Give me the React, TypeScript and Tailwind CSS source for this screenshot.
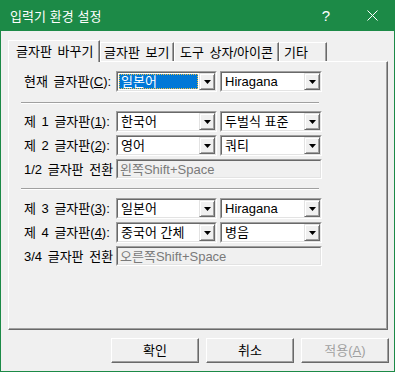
import React from "react";

const font = "font-['Liberation_Sans','Noto_Sans_CJK_KR',sans-serif]";

function DropButton() {
  return (
    <div className="flex h-full w-[16px] shrink-0 items-center justify-center border border-t-[#e3e3e3] border-l-[#e3e3e3] border-r-[#696969] border-b-[#696969] bg-[#f0f0f0] shadow-[inset_1px_1px_0_#ffffff,inset_-1px_-1px_0_#a0a0a0]">
      <svg width="7" height="4" viewBox="0 0 7 4">
        <path d="M0 0h7L3.5 4z" fill="#000" />
      </svg>
    </div>
  );
}

interface ComboProps {
  value: string;
  width: string;
  selected?: boolean;
}

function Combo({ value, width, selected }: ComboProps) {
  return (
    <div
      className={`h-[21px] ${width} border border-t-[#a0a0a0] border-l-[#a0a0a0] border-r-white border-b-white`}
    >
      <div className="flex h-full border border-t-[#696969] border-l-[#696969] border-r-[#e3e3e3] border-b-[#e3e3e3] bg-white">
        <div className="flex min-w-0 flex-1 p-[1px]">
          {selected ? (
            <div className="flex flex-1 items-center border border-dotted border-[#f0c040] bg-[#0078d7] pl-[1px] text-white">
              {value}
            </div>
          ) : (
            <div className="flex flex-1 items-center pl-[2px] text-black">
              {value}
            </div>
          )}
        </div>
        <DropButton />
      </div>
    </div>
  );
}

function DisabledInput({ value }: { value: string }) {
  return (
    <div className="h-[20px] w-[206px] border border-t-[#a0a0a0] border-l-[#a0a0a0] border-r-white border-b-white">
      <div className="flex h-full items-center border border-t-[#696969] border-l-[#696969] border-r-[#e3e3e3] border-b-[#e3e3e3] bg-[#f0f0f0] pl-[2px] text-[#7a7a7a]">
        {value}
      </div>
    </div>
  );
}

function Separator() {
  return (
    <div className="ml-[12px] w-[298px] border-t border-b border-t-[#a0a0a0] border-b-white" />
  );
}

function Row({
  label,
  children,
}: {
  label: React.ReactNode;
  children: React.ReactNode;
}) {
  return (
    <div className="flex items-center">
      <div className="w-[107px] shrink-0 whitespace-nowrap pl-[15px] [word-spacing:2px]">
        {label}
      </div>
      <div className="flex gap-[3px]">{children}</div>
    </div>
  );
}

function Tab({
  label,
  width,
  pad,
  active,
}: {
  label: string;
  width: string;
  pad: string;
  active?: boolean;
}) {
  if (active) {
    return (
      <div
        className={`relative z-10 -mb-[1px] flex h-[22px] ${width} ${pad} items-start border-t border-l border-r border-t-white border-l-white border-r-[#696969] bg-[#f0f0f0] pt-[3px] shadow-[inset_-1px_0_0_#a0a0a0]`}
      >
        {label}
      </div>
    );
  }
  return (
    <div
      className={`flex h-[19px] ${width} ${pad} items-start border-t border-l border-r border-t-white border-l-white border-r-[#696969] bg-[#f0f0f0] pt-[2px] shadow-[inset_-1px_0_0_#a0a0a0]`}
    >
      {label}
    </div>
  );
}

function Button({
  children,
  disabled,
}: {
  children: React.ReactNode;
  disabled?: boolean;
}) {
  return (
    <div
      className={`flex h-[25px] w-[88px] items-center justify-center border border-t-white border-l-white border-r-[#696969] border-b-[#696969] bg-[#f0f0f0] shadow-[inset_-1px_-1px_0_#a0a0a0] ${
        disabled ? "text-[#a0a0a0]" : "text-black"
      }`}
    >
      {children}
    </div>
  );
}

export default function App() {
  return (
    <div
      className={`flex h-[372px] w-[395px] flex-col bg-[#1c8a47] text-[13px] leading-[15px] text-black ${font}`}
    >
      <div className="flex h-[31px] shrink-0 items-center text-white">
        <div className="pl-[10px] text-[13px] font-['Noto_Sans_CJK_KR',sans-serif] [word-spacing:1px]">
          입력기 환경 설정
        </div>
        <div className="ml-auto flex items-center">
          <span className="mr-[37px] text-[15px] font-['Liberation_Sans',sans-serif]">
            ?
          </span>
          <svg width="11" height="11" viewBox="0 0 11 11" className="mr-[17px]">
            <path d="M0.5 0.5l10 10M10.5 0.5l-10 10" stroke="#fff" strokeWidth="1" />
          </svg>
        </div>
      </div>

      <div className="mx-[1px] mb-[1px] flex flex-1 flex-col bg-[#f0f0f0] pl-[7px] pt-[9px]">
        <div className="flex h-[21px] items-end whitespace-nowrap [word-spacing:2px]">
          <Tab label="글자판 바꾸기" width="w-[92px]" pad="pl-[7px]" active />
          <Tab label="글자판 보기" width="w-[74px]" pad="pl-[3px]" />
          <Tab label="도구 상자/아이콘" width="w-[105px]" pad="pl-[5px]" />
          <Tab label="기타" width="w-[48px]" pad="pl-[4px]" />
        </div>

        <div className="flex h-[269px] w-[380px] flex-col border border-t-white border-l-white border-r-[#696969] border-b-[#696969] shadow-[inset_-1px_-1px_0_#a0a0a0]">
          <div className="mt-[9px]">
            <Row
              label={
                <>
                  현재 글자판(<span className="underline">C</span>):
                </>
              }
            >
              <Combo value="일본어" width="w-[101px]" selected />
              <Combo value="Hiragana" width="w-[102px]" />
            </Row>
          </div>

          <div className="mt-[10px]">
            <Separator />
          </div>

          <div className="mt-[7px] flex flex-col gap-[3px]">
            <Row
              label={
                <>
                  제 1 글자판(<span className="underline">1</span>):
                </>
              }
            >
              <Combo value="한국어" width="w-[101px]" />
              <Combo value="두벌식 표준" width="w-[102px]" />
            </Row>
            <Row
              label={
                <>
                  제 2 글자판(<span className="underline">2</span>):
                </>
              }
            >
              <Combo value="영어" width="w-[101px]" />
              <Combo value="쿼티" width="w-[102px]" />
            </Row>
            <Row label="1/2 글자판 전환">
              <DisabledInput value="왼쪽Shift+Space" />
            </Row>
          </div>

          <div className="mt-[9px]">
            <Separator />
          </div>

          <div className="mt-[8px] flex flex-col gap-[3px]">
            <Row
              label={
                <>
                  제 3 글자판(<span className="underline">3</span>):
                </>
              }
            >
              <Combo value="일본어" width="w-[101px]" />
              <Combo value="Hiragana" width="w-[102px]" />
            </Row>
            <Row
              label={
                <>
                  제 4 글자판(<span className="underline">4</span>):
                </>
              }
            >
              <Combo value="중국어 간체" width="w-[101px]" />
              <Combo value="병음" width="w-[102px]" />
            </Row>
            <Row label="3/4 글자판 전환">
              <DisabledInput value="오른쪽Shift+Space" />
            </Row>
          </div>
        </div>

        <div className="mt-[8px] flex justify-end gap-[7px] pr-[5px]">
          <Button>확인</Button>
          <Button>취소</Button>
          <Button disabled>
            적용(<span className="underline">A</span>)
          </Button>
        </div>
      </div>
    </div>
  );
}
